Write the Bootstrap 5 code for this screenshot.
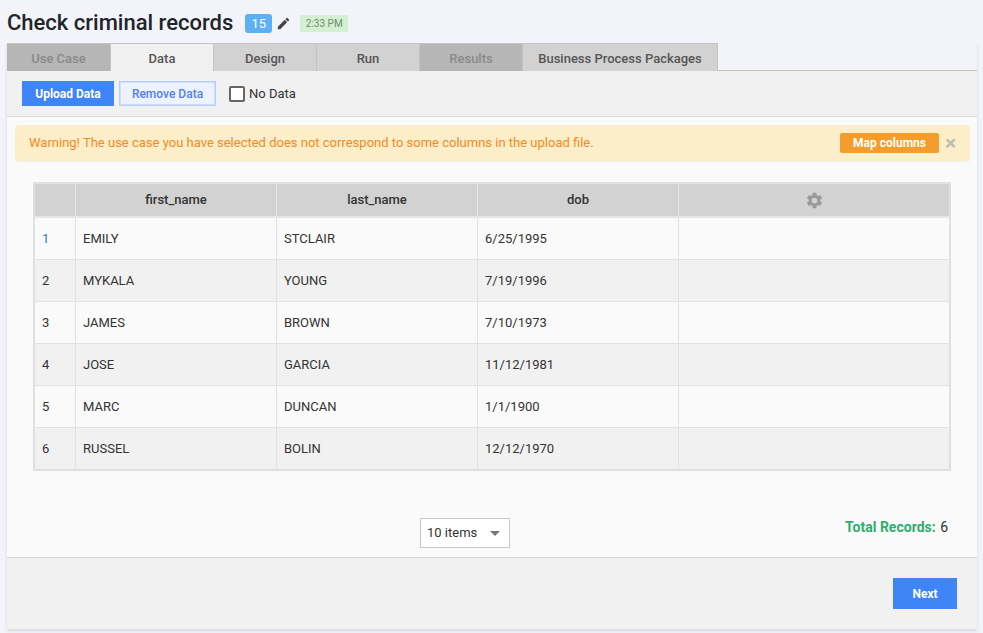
<!DOCTYPE html>
<html lang="en">
<head>
<meta charset="utf-8">
<title>Check criminal records</title>
<link href="https://cdn.jsdelivr.net/npm/bootstrap@5.3.0/dist/css/bootstrap.min.css" rel="stylesheet">
<style>
html,body{height:100%;}
body{background:#f3f4f9;font-family:Roboto,"Liberation Sans",sans-serif;font-size:13px;color:#333;overflow:hidden;}
.page-head{height:43px;padding-left:7px;padding-top:3px;}
.page-title{font-size:22px;font-weight:500;color:#212529;margin:0;line-height:40px;}
.count-tag{background:#5eb0f5;color:#fff;font-size:13px;line-height:19px;height:19px;width:27px;text-align:center;border-radius:3px;margin-left:12px;}
.edit-ico{width:15px;height:15px;margin-left:4px;fill:#444;}
.time-tag{background:#d4f0d4;color:#6d8a6d;font-size:10px;line-height:17px;height:17px;width:48px;text-align:center;margin-left:9px;}
.panel-wrap{margin:0 6px 0 7px;height:586px;background:#fafafa;box-shadow:0 2px 3px rgba(0,0,0,.12);display:flex;flex-direction:column;}
.tab-strip{display:flex;height:28px;background:#f3f4f9;border-bottom:1px solid #c4c4c4;}
.tab-item{width:103px;height:28px;background:#d2d2d2;border:1px solid #c4c4c4;border-bottom:0;border-left:0;text-align:center;font-weight:500;color:#555;line-height:29px;font-size:13px;}
.tab-item.tab-off{background:#b6b6b6;color:#8a8a8a;}
.tab-item.tab-first{width:104px;}
.tab-item.tab-on{background:#f1f1f1;height:28px;border-top:1px solid #c4c4c4;}
.tab-item.tab-wide{width:195px;}
.tool-row{height:46px;background:#f1f1f1;border-bottom:1px solid #dcdcdc;padding-left:15px;display:flex;align-items:center;}
.act-btn{background:#3f85f7;color:#fff;border:0;border-radius:0;font-size:12px;font-weight:700;padding:0;height:25px;width:92px;}
.act-btn:hover{background:#3f85f7;color:#fff;}
.ghost-btn{background:#edf3fe;color:#5580ee;border:1px solid #b7cdf5;box-shadow:0 0 0 1px #cfdefa inset;border-radius:0;font-size:12px;font-weight:500;padding:0;height:25px;width:97px;margin-left:5px;}
.tick-box{width:16px;height:16px;border:2px solid #666;border-radius:2px;margin-left:13px;background:#fff;}
.tick-label{margin-left:4px;color:#333;font-size:13px;}
.warn-box{margin:8px 7px 0 8px;height:36px;background:#fdeeca;border-radius:4px;box-shadow:0 1px 2px rgba(0,0,0,.06);display:flex;align-items:center;padding:0 14px;color:#f58a1f;font-size:13px;}
.map-btn{background:#f49c2c;color:#fff;border:0;border-radius:2px;font-size:12px;font-weight:700;width:99px;height:20px;padding:0;margin-left:auto;line-height:20px;}
.map-btn:hover{background:#f49c2c;color:#fff;}
.warn-x{color:#bdbdb0;font-size:21px;font-weight:700;line-height:1;margin-left:6px;width:11px;text-align:center;}
.grid-wrap{margin:21px 26px 0 26px;border:2px solid #e0e0e0;width:918px;}
.rec-table{width:100%;table-layout:fixed;margin:0;border-collapse:separate;border-spacing:0;}
.rec-table th{background:#d2d2d2;text-align:center;font-weight:500;font-size:13px;height:34px;padding:0;border-right:1px solid #e6e6e6;border-bottom:2px solid #e6e6e6;color:#333;}
.rec-table td{height:42px;padding:0 7px;border-right:1px solid #e2e2e2;border-bottom:1px solid #e2e2e2;font-size:13px;background:#fafafa;color:#333;}
.rec-table tr:nth-child(even) td{background:#f1f1f1;}
.rec-table tr:last-child td{border-bottom:0;height:41px;}
.rec-table th:last-child,.rec-table td:last-child{border-right:0;}
.first-num{color:#2a7ab8 !important;}
.gear-ico{width:19px;height:19px;fill:#999;display:block;margin:0 auto;}
.pager-row{position:relative;height:86px;display:flex;justify-content:center;align-items:flex-end;padding-bottom:9px;}
.size-pick{width:90px;height:30px;background:#fff;border:1px solid #c9c9c9;display:flex;align-items:center;padding:0 6px;justify-content:space-between;color:#333;font-size:13px;margin-left:-54px;}
.pick-arrow{width:0;height:0;border-left:5px solid transparent;border-right:5px solid transparent;border-top:5px solid #777;margin-right:3px;}
.total-line{position:absolute;right:29px;bottom:19px;font-size:14px;}
.total-key{color:#2cb06f;font-weight:700;margin-right:1px;}
.foot-row{margin-top:auto;height:72px;background:#f1f1f1;border-top:1px solid #d6d6d6;display:flex;justify-content:flex-end;align-items:flex-start;padding:20px 20px 0 0;}
.next-btn{background:#3f85f7;color:#fff;border:0;border-radius:0;width:64px;height:31px;font-size:12px;font-weight:700;padding:0;}
.next-btn:hover{background:#3f85f7;color:#fff;}
</style>
</head>
<body>
<div class="page-head d-flex align-items-center">
  <h1 class="page-title">Check criminal records</h1>
  <span class="count-tag">15</span>
  <svg class="edit-ico" viewBox="0 0 24 24"><path d="M3 17.25V21h3.75L17.81 9.94l-3.75-3.75L3 17.25zM20.71 7.04a1 1 0 0 0 0-1.41l-2.34-2.34a1 1 0 0 0-1.41 0l-1.83 1.83 3.75 3.75 1.83-1.83z"/></svg>
  <span class="time-tag">2:33 PM</span>
</div>
<div class="panel-wrap">
  <div class="tab-strip">
    <div class="tab-item tab-off tab-first">Use Case</div>
    <div class="tab-item tab-on">Data</div>
    <div class="tab-item">Design</div>
    <div class="tab-item">Run</div>
    <div class="tab-item tab-off">Results</div>
    <div class="tab-item tab-wide">Business Process Packages</div>
  </div>
  <div class="tool-row">
    <button class="btn act-btn" type="button">Upload Data</button>
    <button class="btn ghost-btn" type="button">Remove Data</button>
    <span class="tick-box"></span>
    <span class="tick-label">No Data</span>
  </div>
  <div class="warn-box">
    <span>Warning! The use case you have selected does not correspond to some columns in the upload file.</span>
    <button class="btn map-btn" type="button">Map columns</button>
    <span class="warn-x">×</span>
  </div>
  <div class="grid-wrap">
    <table class="rec-table">
      <colgroup><col style="width:41px"><col style="width:201px"><col style="width:201px"><col style="width:201px"><col></colgroup>
      <thead><tr><th></th><th>first_name</th><th>last_name</th><th>dob</th><th>
        <svg class="gear-ico" viewBox="0 0 24 24"><path d="M19.14 12.94a7.5 7.5 0 0 0 .05-.94 7.5 7.5 0 0 0-.05-.94l2.03-1.58a.5.5 0 0 0 .12-.64l-1.92-3.32a.5.5 0 0 0-.61-.22l-2.39.96a7 7 0 0 0-1.62-.94l-.36-2.54a.5.5 0 0 0-.49-.42h-3.84a.5.5 0 0 0-.49.42l-.36 2.54a7 7 0 0 0-1.62.94l-2.39-.96a.5.5 0 0 0-.61.22L2.71 8.84a.5.5 0 0 0 .12.64l2.03 1.58a7.6 7.6 0 0 0 0 1.88l-2.03 1.58a.5.5 0 0 0-.12.64l1.92 3.32c.13.22.39.3.61.22l2.39-.96c.5.38 1.04.7 1.62.94l.36 2.54c.04.24.25.42.49.42h3.84c.24 0 .45-.18.49-.42l.36-2.54a7 7 0 0 0 1.62-.94l2.39.96c.22.08.48 0 .61-.22l1.92-3.32a.5.5 0 0 0-.12-.64l-2.03-1.58zM12 15.6a3.6 3.6 0 1 1 0-7.2 3.6 3.6 0 0 1 0 7.2z"/></svg>
      </th></tr></thead>
      <tbody>
        <tr><td class="first-num">1</td><td>EMILY</td><td>STCLAIR</td><td>6/25/1995</td><td></td></tr>
        <tr><td>2</td><td>MYKALA</td><td>YOUNG</td><td>7/19/1996</td><td></td></tr>
        <tr><td>3</td><td>JAMES</td><td>BROWN</td><td>7/10/1973</td><td></td></tr>
        <tr><td>4</td><td>JOSE</td><td>GARCIA</td><td>11/12/1981</td><td></td></tr>
        <tr><td>5</td><td>MARC</td><td>DUNCAN</td><td>1/1/1900</td><td></td></tr>
        <tr><td>6</td><td>RUSSEL</td><td>BOLIN</td><td>12/12/1970</td><td></td></tr>
      </tbody>
    </table>
  </div>
  <div class="pager-row">
    <div class="size-pick"><span>10 items</span><span class="pick-arrow"></span></div>
    <div class="total-line"><span class="total-key">Total Records:</span> 6</div>
  </div>
  <div class="foot-row">
    <button class="btn next-btn" type="button">Next</button>
  </div>
</div>
<script src="https://cdn.jsdelivr.net/npm/bootstrap@5.3.0/dist/js/bootstrap.bundle.min.js"></script>
</body>
</html>
